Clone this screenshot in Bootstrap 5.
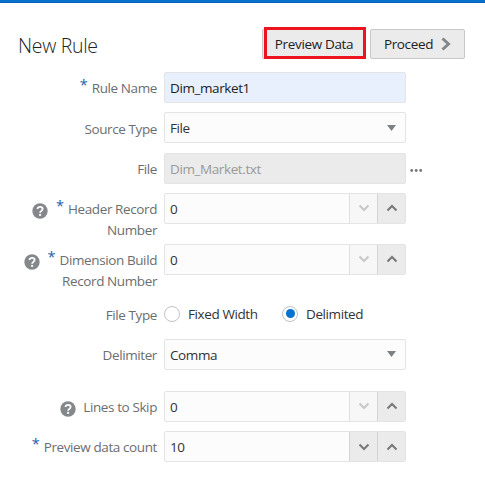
<!DOCTYPE html>
<html lang="en">
<head>
<meta charset="utf-8">
<meta name="viewport" content="width=device-width, initial-scale=1">
<title>New Rule</title>
<link href="https://cdn.jsdelivr.net/npm/bootstrap@5.3.0/dist/css/bootstrap.min.css" rel="stylesheet">
<style>
body{font-family:"Open Sans","Noto Sans",sans-serif;font-size:13.5px;line-height:21px;color:#333;background:#fff;overflow:hidden;letter-spacing:-.4px}
.topline{height:3px;background:#0572ce;border-bottom:1px solid #0561bd}
.page-head{height:31px;margin:26px 20px 12px 18px}
.page-title{font-size:19.5px;line-height:31px;padding-top:1px;color:#222;font-weight:300;letter-spacing:-.3px}
.tool{height:30px;border:1px solid #c8c8c8;border-radius:2px;background:#ebebeb;color:#222;font-size:13.5px;line-height:20px;letter-spacing:-.35px}
.tool-preview{width:103px;margin-right:1px;padding-left:1px!important}
.tool-proceed{width:95px}
.marker{left:1px;top:-3px;width:102px;height:32px;border:3px solid #ee1320}
.field-row{height:40.3px}
.row-tall{height:51px}
.row-radio{height:44px}
.row-delim{height:52px}
.label-side{width:157px;margin-right:7px;padding-top:6.3px;color:#6b6e70}
.label-side .req{width:7px;margin-right:5px;color:#1a63ac;font-size:14.5px;line-height:20px;margin-top:-3px;letter-spacing:0}
.help{width:16px;height:16px;margin:3.7px 7px 0 0}
.req-after{margin-right:8px}
.box{width:242.4px;height:31px;border:1px solid #e4e4e4;border-radius:2px;background:#fcfcfc;padding-left:5px;color:#333}
.box-text{padding-top:2px}
.box-fill{background:#e8f0fe;color:#222}
.box-off{background:#ebebeb;color:#999}
.caret{width:9px;height:6px;margin-right:9px}
.step{width:28px;border-left:1px solid #d4d4d4;background:#ebebeb;color:#777}
.step-off{background:#f7f7f7;color:#c6c8ca;border-left-color:#e0e0e0}
.ring{width:16px;height:16px;border:1px solid #bfc3c6;border-radius:50%}
.ring-dot{width:9px;height:9px;border-radius:50%;background:#0572ce}
.radio-line{padding-top:3.5px}
.opt{color:#333;height:31px}
.opt-one{width:118px}
</style>
</head>
<body>
<div class="topline"></div>
<header class="page-head d-flex justify-content-between">
  <h1 class="page-title m-0">New Rule</h1>
  <div class="d-flex gap-1">
    <button class="btn tool tool-preview position-relative p-0">Preview Data<span class="marker position-absolute"></span></button>
    <button class="btn tool tool-proceed p-0 d-flex align-items-center justify-content-center gap-2"><span>Proceed</span>
      <svg width="10" height="14" viewBox="0 0 10 14" fill="none" stroke="#85888a" stroke-width="3"><path d="M1.5 1.5 7.5 7l-6 5.5"/></svg></button>
  </div>
</header>
<svg class="d-none"><defs>
  <symbol id="help" viewBox="0 0 16 16"><circle cx="8" cy="8" r="7.7" fill="#85888a"/><path d="M5.5 6.1C5.5 3 10.6 3 10.6 6.1c0 1.8-2.5 1.8-2.5 3.7" fill="none" stroke="#fff" stroke-width="1.8"/><path d="M7.1 10.9h2v1.9h-2z" fill="#fff"/></symbol>
  <symbol id="tri" viewBox="0 0 9 6"><path d="M0 0h9L4.5 6z" fill="#7d8183"/></symbol>
  <symbol id="down" viewBox="0 0 12 8"><path d="m1.5 1.5 4.5 4.5 4.5-4.5" fill="none" stroke="currentColor" stroke-width="2"/></symbol>
  <symbol id="up" viewBox="0 0 12 8"><path d="M1.5 6.5 6 2l4.5 4.5" fill="none" stroke="currentColor" stroke-width="2"/></symbol>
</defs></svg>
<main>
  <div class="field-row d-flex">
    <div class="label-side d-flex justify-content-end"><span class="req">*</span><span>Rule Name</span></div>
    <div class="box box-fill d-flex align-items-center"><span class="box-text">Dim_market1</span></div>
  </div>
  <div class="field-row d-flex">
    <div class="label-side d-flex justify-content-end">Source Type</div>
    <div class="box d-flex align-items-center justify-content-between"><span class="box-text">File</span><svg class="caret"><use href="#tri"/></svg></div>
  </div>
  <div class="field-row d-flex">
    <div class="label-side d-flex justify-content-end">File</div>
    <div class="box box-off d-flex align-items-center"><span class="box-text">Dim_Market.txt</span></div>
    <svg class="ms-1 mt-3" width="13" height="3" fill="#737779"><circle cx="1.7" cy="1.5" r="1.4"/><circle cx="6.2" cy="1.5" r="1.4"/><circle cx="10.7" cy="1.5" r="1.4"/></svg>
  </div>
  <div class="field-row row-tall d-flex">
    <div class="label-side d-flex justify-content-end text-end"><svg class="help req-after"><use href="#help"/></svg><span class="req">*</span><span>Header Record<br>Number</span></div>
    <div class="box d-flex"><span class="box-text flex-grow-1 align-self-center">0</span><span class="step step-off d-flex align-items-center justify-content-center"><svg width="12" height="8"><use href="#down"/></svg></span><span class="step d-flex align-items-center justify-content-center"><svg width="12" height="8"><use href="#up"/></svg></span></div>
  </div>
  <div class="field-row row-tall d-flex">
    <div class="label-side d-flex justify-content-end text-end"><svg class="help req-after"><use href="#help"/></svg><span class="req">*</span><span>Dimension Build<br>Record Number</span></div>
    <div class="box d-flex"><span class="box-text flex-grow-1 align-self-center">0</span><span class="step step-off d-flex align-items-center justify-content-center"><svg width="12" height="8"><use href="#down"/></svg></span><span class="step d-flex align-items-center justify-content-center"><svg width="12" height="8"><use href="#up"/></svg></span></div>
  </div>
  <div class="field-row row-radio radio-line d-flex">
    <div class="label-side d-flex justify-content-end">File Type</div>
    <div class="opt opt-one d-flex align-items-center gap-2"><span class="ring"></span><span class="box-text">Fixed Width</span></div>
    <div class="opt d-flex align-items-center gap-2"><span class="ring d-flex align-items-center justify-content-center"><span class="ring-dot"></span></span><span class="box-text">Delimited</span></div>
  </div>
  <div class="field-row row-delim d-flex">
    <div class="label-side d-flex justify-content-end">Delimiter</div>
    <div class="box d-flex align-items-center justify-content-between"><span class="box-text">Comma</span><svg class="caret"><use href="#tri"/></svg></div>
  </div>
  <div class="field-row d-flex">
    <div class="label-side d-flex justify-content-end"><svg class="help"><use href="#help"/></svg><span>Lines to Skip</span></div>
    <div class="box d-flex"><span class="box-text flex-grow-1 align-self-center">0</span><span class="step step-off d-flex align-items-center justify-content-center"><svg width="12" height="8"><use href="#down"/></svg></span><span class="step d-flex align-items-center justify-content-center"><svg width="12" height="8"><use href="#up"/></svg></span></div>
  </div>
  <div class="field-row d-flex">
    <div class="label-side d-flex justify-content-end"><span class="req">*</span><span>Preview data count</span></div>
    <div class="box d-flex"><span class="box-text flex-grow-1 align-self-center">10</span><span class="step d-flex align-items-center justify-content-center"><svg width="12" height="8"><use href="#down"/></svg></span><span class="step d-flex align-items-center justify-content-center"><svg width="12" height="8"><use href="#up"/></svg></span></div>
  </div>
</main>
<script src="https://cdn.jsdelivr.net/npm/bootstrap@5.3.0/dist/js/bootstrap.bundle.min.js"></script>
</body>
</html>
